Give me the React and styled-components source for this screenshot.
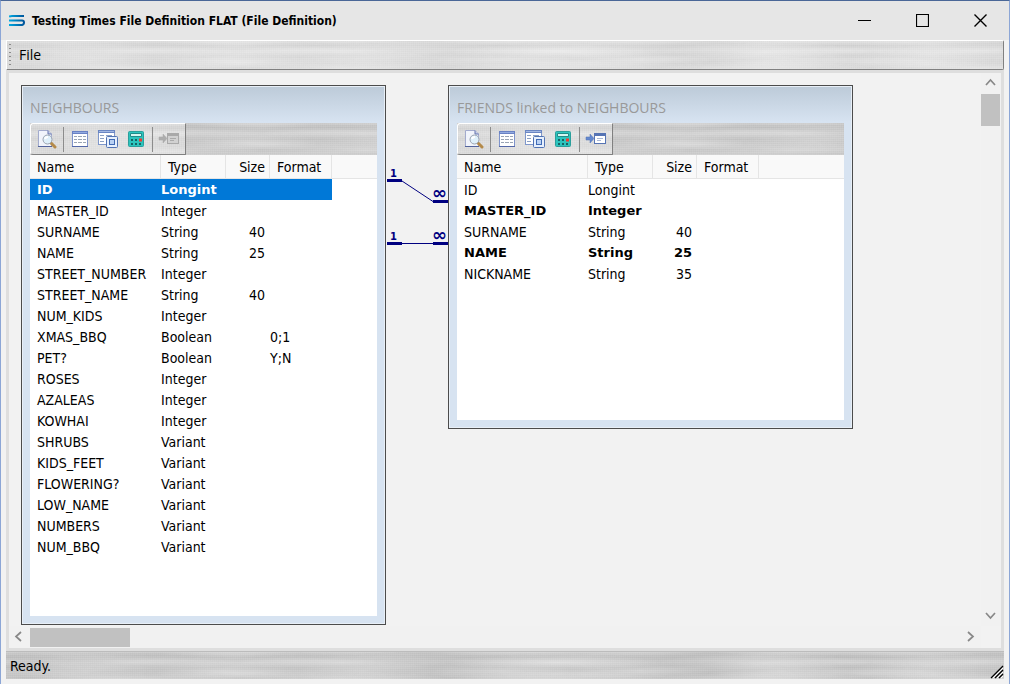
import styled, { createGlobalStyle, css } from "styled-components";

const UI_FONT = `"DejaVu Sans Condensed", "Noto Sans", sans-serif`;
const WIDE_FONT = `"DejaVu Sans", "Noto Sans", sans-serif`;
const CAPTION_FONT = `"Open Sans", "Noto Sans", sans-serif`;
const NAVY = "#000080";
const SELECTED = "#0078d7";

const GlobalStyle = createGlobalStyle`
  * {
    box-sizing: border-box;
  }
  body {
    margin: 0;
    background: #f2f2f2;
    color: #000;
    font-family: ${UI_FONT};
    font-size: 14px;
  }
  button {
    padding: 0;
    border: 0;
    background: none;
    color: inherit;
    font: inherit;
  }
`;

const brushed = css`
  background-color: ${({ $dark }) => ($dark ? "#c3c3c3" : "#dadada")};
  background-image: radial-gradient(
      closest-side,
      rgba(255, 255, 255, 0.3),
      transparent
    ),
    radial-gradient(closest-side, rgba(255, 255, 255, 0.25), transparent),
    radial-gradient(closest-side, rgba(0, 0, 0, 0.04), transparent),
    radial-gradient(closest-side, rgba(255, 255, 255, 0.22), transparent),
    repeating-linear-gradient(
      0deg,
      rgba(255, 255, 255, 0.1) 0 1px,
      transparent 1px 2px
    ),
    repeating-linear-gradient(
      90deg,
      rgba(0, 0, 0, 0.02) 0 1px,
      transparent 1px 2px
    );
  background-size: 211px 17px, 307px 11px, 173px 9px, 139px 23px, auto, auto;
  background-position: 20px 2px, 90px 5px, 60px 0, 10px 8px, 0 0, 0 0;
`;

const Window = styled.div`
  display: flex;
  flex-direction: column;
  min-height: 100vh;
  border: solid #8ca6d6;
  border-width: 1px 1px 0;
  border-top-color: #4a6797;
`;

const TitleBar = styled.header`
  display: flex;
  align-items: center;
  height: 39px;
  padding-left: 8px;
  background: #e6e6e6;
`;

const WindowTitle = styled.h1`
  flex: 1;
  margin: 0 0 0 7px;
  font-size: 12px;
  line-height: 16px;
  white-space: nowrap;
`;

const CaptionButton = styled.button`
  display: grid;
  place-items: center;
  width: 58px;
  height: 38px;
`;

const Body = styled.div`
  display: flex;
  flex: 1;
  flex-direction: column;
  padding: 0 5px 5px;
`;

const MenuBar = styled.nav`
  ${brushed}
  display: flex;
  align-items: center;
  height: 30px;
  padding-left: 2px;
  border: 1px solid #808080;
  border-top-color: #fff;
  border-left-color: #fff;
  border-radius: 0 2px 2px 0;
`;

const Grip = styled.span`
  width: 2px;
  height: 23px;
  background: repeating-linear-gradient(#8a8a8a 0 1px, transparent 1px 4px);
`;

const MenuButton = styled.button`
  padding: 0 8px;
  font-family: ${CAPTION_FONT};
  font-size: 14px;
  line-height: 20px;
`;

const Workspace = styled.main`
  display: grid;
  flex: 1;
  grid-template: 1fr 22px / 1fr 20px;
  border: 3px solid #dedede;
`;

const Canvas = styled.div`
  position: relative;
  min-height: 553px;
  overflow: hidden;
`;

const ScrollTrack = styled.div`
  display: flex;
  flex-direction: ${({ $vertical }) => ($vertical ? "column" : "row")};
  align-items: flex-start;
  background: #f1f1f1;
`;

const ScrollButton = styled.button`
  display: grid;
  place-items: center;
  width: ${({ $vertical }) => ($vertical ? "19px" : "21px")};
  height: 21px;
  ${({ $end, $vertical }) =>
    $end && ($vertical ? "margin-top: auto;" : "margin-left: auto;")}
`;

const ScrollThumb = styled.div`
  width: ${({ $vertical }) => ($vertical ? "19px" : "100px")};
  height: ${({ $vertical }) => ($vertical ? "32px" : "19px")};
  margin: ${({ $vertical }) => ($vertical ? "0" : "2px 0 0")};
  background: #c1c1c1;
`;

const StatusBar = styled.footer`
  ${brushed}
  display: flex;
  align-items: center;
  justify-content: space-between;
  height: 28px;
  padding-left: 4px;
  border-top: 1px solid #bcbcbc;
`;

const SizeGrip = styled.svg`
  align-self: flex-end;
`;

const FileWindow = styled.section`
  position: absolute;
  left: ${({ $x }) => $x}px;
  top: 12px;
  display: flex;
  flex-direction: column;
  width: ${({ $width }) => $width}px;
  height: ${({ $height }) => $height}px;
  padding: 0 8px 8px;
  border: 1px solid #4c4c4c;
  background: linear-gradient(#bccad8, #d7e3f1 36px);
  box-shadow: inset 1px 1px #e8eff7, inset -1px -1px #e8eff7;
`;

const FileTitle = styled.h2`
  margin: 0;
  padding: 11px 0 4px;
  color: #999;
  font-family: ${CAPTION_FONT};
  font-size: 14px;
  font-weight: 400;
  line-height: 22px;
  white-space: nowrap;
`;

const ToolStrip = styled.div`
  ${brushed}
  display: flex;
  flex: none;
  height: 32px;
`;

const ToolGroup = styled.div`
  ${brushed}
  display: flex;
  align-items: center;
  width: 156px;
  padding-left: 2px;
  border: 1px solid #808080;
  border-top-color: #fff;
  border-left-color: #fff;
  border-radius: 3px 1px 1px 3px;
`;

const ToolButton = styled.button`
  display: grid;
  place-items: center;
  width: 28px;
  height: 26px;
`;

const Separator = styled.span`
  width: 1px;
  height: 25px;
  margin: 0 2px;
  background: #8c8c8c;
`;

const FieldList = styled.div`
  flex: 1;
  background: #fff;
  overflow: hidden;
`;

const Table = styled.table`
  width: 100%;
  border-collapse: separate;
  border-spacing: 0;
  table-layout: fixed;
`;

const Col = styled.col`
  width: ${({ $width }) => $width}px;
`;

const HeadCell = styled.th`
  height: 24px;
  padding: 0 4px 0 7px;
  border: solid #e5e5e5;
  border-width: 0 1px 1px 0;
  background: #f9f9f9;
  font-weight: 400;
  text-align: ${({ $right }) => ($right ? "right" : "left")};

  &:last-child {
    border-right: 0;
  }
`;

const Row = styled.tr`
  ${({ $bold }) =>
    $bold &&
    css`
      font-family: ${WIDE_FONT};
      font-size: 13px;
      font-weight: 700;
    `}

  ${({ $selected }) =>
    $selected &&
    css`
      color: #fff;
      td:not(:last-child) {
        background: ${SELECTED};
      }
    `}
`;

const Cell = styled.td`
  height: 21px;
  padding: 0;
  line-height: 20px;
  white-space: nowrap;

  &:first-child {
    padding-left: 7px;
  }
  &:nth-child(3) {
    padding-right: 5px;
    text-align: right;
  }
`;

const Links = styled.svg`
  position: absolute;
  left: 377px;
  top: 92px;
  fill: ${NAVY};
  font-family: ${WIDE_FONT};
  font-weight: 700;
`;

const neighbours = [
  ["ID", "Longint"],
  ["MASTER_ID", "Integer"],
  ["SURNAME", "String", "40"],
  ["NAME", "String", "25"],
  ["STREET_NUMBER", "Integer"],
  ["STREET_NAME", "String", "40"],
  ["NUM_KIDS", "Integer"],
  ["XMAS_BBQ", "Boolean", "", "0;1"],
  ["PET?", "Boolean", "", "Y;N"],
  ["ROSES", "Integer"],
  ["AZALEAS", "Integer"],
  ["KOWHAI", "Integer"],
  ["SHRUBS", "Variant"],
  ["KIDS_FEET", "Variant"],
  ["FLOWERING?", "Variant"],
  ["LOW_NAME", "Variant"],
  ["NUMBERS", "Variant"],
  ["NUM_BBQ", "Variant"],
];

const friends = [
  ["ID", "Longint"],
  ["MASTER_ID", "Integer"],
  ["SURNAME", "String", "40"],
  ["NAME", "String", "25"],
  ["NICKNAME", "String", "35"],
];

const Logo = () => (
  <svg width="16" height="11" viewBox="0 0 16 11" aria-hidden="true">
    <defs>
      <linearGradient id="logo" gradientUnits="userSpaceOnUse" x2="16">
        <stop stopColor="#00a8e0" />
        <stop offset="1" stopColor="#004f96" />
      </linearGradient>
    </defs>
    <g fill="none" stroke="url(#logo)" strokeWidth="2">
      <path d="M15 1H3Q1 1 0 1.500" />
      <path d="M0 5.500H13Q15 5.500 15 7.500T13 10H0" />
    </g>
  </svg>
);

const PreviewIcon = () => (
  <svg width="20" height="20" viewBox="0 0 20 20" aria-hidden="true">
    <path d="M1.500 1.500H11L14.500 5V17.500H1.500Z" fill="#f1f4fb" stroke="#a3abcd" />
    <path d="M11 1.500V5H14.500" fill="#c8d0e8" stroke="#6273ad" />
    <path d="M1 17.500H15" stroke="#53639c" />
    <path d="M13 13L18 18" stroke="#b48a4a" strokeWidth="3" strokeLinecap="round" />
    <circle cx="10.500" cy="10.500" r="4.500" fill="#dff0fa" stroke="#9aa3b0" />
    <path d="M8 10Q8.500 8 11 8" fill="none" stroke="#fff" strokeWidth="2" />
  </svg>
);

const TableIcon = () => (
  <svg width="18" height="18" viewBox="0 0 18 18" aria-hidden="true">
    <rect x="1.500" y="1.500" width="15" height="15" fill="#fff" stroke="#7e93cb" />
    <path d="M1 1H17V4H1Z" fill="#6a82c4" />
    <path d="M2 2.500H16" stroke="#93abe0" />
    <path
      d="M3 6.500H6M7 6.500H11M12 6.500H15M3 9.500H6M7 9.500H11M12 9.500H15M3 12.500H6M7 12.500H11M12 12.500H15"
      stroke="#9aa5b5"
      strokeWidth="1"
    />
    <path d="M1 16.500H17" stroke="#5468a8" />
  </svg>
);

const FormIcon = () => (
  <svg width="22" height="20" viewBox="0 0 22 20" aria-hidden="true">
    <rect x="1.500" y="1.500" width="16" height="14" fill="#fff" stroke="#7f97cb" />
    <path d="M1 1H18V4H1Z" fill="#6a86c3" />
    <path d="M2 2.500H17" stroke="#a3b8e3" />
    <path d="M3 6.500H7M3 9.500H7M3 12.500H7M9 6.500H15" stroke="#8ba0c4" />
    <rect x="9.500" y="7.500" width="11" height="11" rx="1" fill="#e7f0fd" stroke="#5173b4" />
    <rect x="12.500" y="10.500" width="5" height="5" fill="#b9d1f4" stroke="#416bb5" />
  </svg>
);

const CalculatorIcon = () => (
  <svg width="18" height="18" viewBox="0 0 18 18" aria-hidden="true">
    <rect x="1.500" y="1.500" width="15" height="15" rx="1" fill="#2cc4bd" stroke="#2b9f9c" />
    <path d="M3.500 3.500H14.500V6.500H3.500Z" fill="#d3f7f2" stroke="#218b89" />
    <path
      d="M4 10H6M8 10H10M4 14H6M8 14H10M12 14H14"
      stroke="#176264"
      strokeWidth="2"
    />
    <path d="M12 10H15" stroke="#ef3b32" strokeWidth="3" />
  </svg>
);

const GoToIcon = ({ disabled }) => {
  const dark = disabled ? "#a9a9a9" : "#5674b4";
  return (
    <svg width="22" height="16" viewBox="0 0 22 16" aria-hidden="true">
      <rect
        x="9.500"
        y="2.500"
        width="11"
        height="10"
        fill={disabled ? "#d1d1d1" : "#fff"}
        stroke={dark}
      />
      <path d="M9 2H21V5H9Z" fill={dark} />
      <path d="M12 7.500H18M12 9.500H16" stroke={disabled ? "#aaa" : "#a8b7d5"} />
      <path
        d="M1 6H5V3L9 7.500L5 12V9H1Z"
        fill={disabled ? "#adadad" : "#6388ce"}
        stroke={dark}
        strokeWidth=".5"
      />
    </svg>
  );
};

const arrows = {
  up: "M1 7L5.500 2L10 7",
  down: "M1 3L5.500 8L10 3",
  left: "M7 1L2 5.500L7 10",
  right: "M3 1L8 5.500L3 10",
};

const Arrow = ({ direction }) => (
  <svg width="11" height="11" viewBox="0 0 11 11" aria-hidden="true">
    <path d={arrows[direction]} fill="none" stroke="#888" strokeWidth="1.700" />
  </svg>
);

const FileDefinition = ({ title, fields, bold, selected, linked, ...place }) => (
  <FileWindow {...place}>
    <FileTitle>{title}</FileTitle>
    <ToolStrip $dark>
      <ToolGroup>
        <ToolButton aria-label="Preview">
          <PreviewIcon />
        </ToolButton>
        <Separator />
        <ToolButton aria-label="Data grid">
          <TableIcon />
        </ToolButton>
        <ToolButton aria-label="Forms">
          <FormIcon />
        </ToolButton>
        <ToolButton aria-label="Calculations">
          <CalculatorIcon />
        </ToolButton>
        <Separator />
        <ToolButton aria-label="Go to master file" disabled={!linked}>
          <GoToIcon disabled={!linked} />
        </ToolButton>
      </ToolGroup>
    </ToolStrip>
    <FieldList>
      <Table>
        <colgroup>
          <Col $width={131} />
          <Col $width={65} />
          <Col $width={44} />
          <Col $width={62} />
          <col />
        </colgroup>
        <thead>
          <tr>
            <HeadCell>Name</HeadCell>
            <HeadCell>Type</HeadCell>
            <HeadCell $right>Size</HeadCell>
            <HeadCell>Format</HeadCell>
            <HeadCell as="td" />
          </tr>
        </thead>
        <tbody>
          {fields.map(([name, type, size, format]) => (
            <Row
              key={name}
              $bold={bold.includes(name)}
              $selected={name === selected}
            >
              <Cell>{name}</Cell>
              <Cell>{type}</Cell>
              <Cell>{size}</Cell>
              <Cell>{format}</Cell>
              <Cell />
            </Row>
          ))}
        </tbody>
      </Table>
    </FieldList>
  </FileWindow>
);

const App = () => (
  <>
    <GlobalStyle />
    <Window>
      <TitleBar>
        <Logo />
        <WindowTitle>
          Testing Times File Definition FLAT (File Definition)
        </WindowTitle>
        <CaptionButton aria-label="Minimize">
          <svg width="13" height="13">
            <path d="M0 6.500H13" stroke="#000" />
          </svg>
        </CaptionButton>
        <CaptionButton aria-label="Maximize">
          <svg width="13" height="13">
            <path
              d="M.500 .500H12.500V12.500H.500Z"
              fill="none"
              stroke="#000"
              strokeWidth="1.200"
            />
          </svg>
        </CaptionButton>
        <CaptionButton aria-label="Close">
          <svg width="13" height="13">
            <path d="M.500 .500L12.500 12.500M12.500 .500L.500 12.500" stroke="#000" strokeWidth="1.400" />
          </svg>
        </CaptionButton>
      </TitleBar>
      <Body>
        <MenuBar>
          <Grip />
          <MenuButton>File</MenuButton>
        </MenuBar>
        <Workspace>
          <Canvas>
            <Links width="64" height="84" viewBox="0 0 64 84">
              {/* one-to-many: master on the left, linked file on the right */}
              <path d="M1 14H16V17H1ZM47 35H62V38H47ZM1 77H16V80H1ZM47 77H62V80H47Z" />
              <path d="M16 16L47 36.500M16 78.500H47" stroke={NAVY} />
              <text x="4" y="12" fontSize="10">1</text>
              <text x="46" y="34" fontSize="18">∞</text>
              <text x="4" y="75" fontSize="10">1</text>
              <text x="46" y="76" fontSize="18">∞</text>
            </Links>
            <FileDefinition
              title="NEIGHBOURS"
              fields={neighbours}
              bold={["ID"]}
              selected="ID"
              $x={12}
              $width={365}
              $height={540}
            />
            <FileDefinition
              title="FRIENDS linked to NEIGHBOURS"
              fields={friends}
              bold={["MASTER_ID", "NAME"]}
              linked
              $x={439}
              $width={405}
              $height={344}
            />
          </Canvas>
          <ScrollTrack $vertical>
            <ScrollButton aria-label="Scroll up" $vertical>
              <Arrow direction="up" />
            </ScrollButton>
            <ScrollThumb $vertical />
            <ScrollButton aria-label="Scroll down" $vertical $end>
              <Arrow direction="down" />
            </ScrollButton>
          </ScrollTrack>
          <ScrollTrack>
            <ScrollButton aria-label="Scroll left">
              <Arrow direction="left" />
            </ScrollButton>
            <ScrollThumb />
            <ScrollButton aria-label="Scroll right" $end>
              <Arrow direction="right" />
            </ScrollButton>
          </ScrollTrack>
        </Workspace>
        <StatusBar $dark>
          <span>Ready.</span>
          <SizeGrip width="14" height="14" aria-hidden="true">
            <path
              d="M1 13L13 1M5 13L13 5M9 13L13 9"
              stroke="#000"
              strokeWidth="1.200"
            />
            <path d="M3 13L13 3M7 13L13 7M11 13L13 11" stroke="#fff" />
          </SizeGrip>
        </StatusBar>
      </Body>
    </Window>
  </>
);

export default App;
